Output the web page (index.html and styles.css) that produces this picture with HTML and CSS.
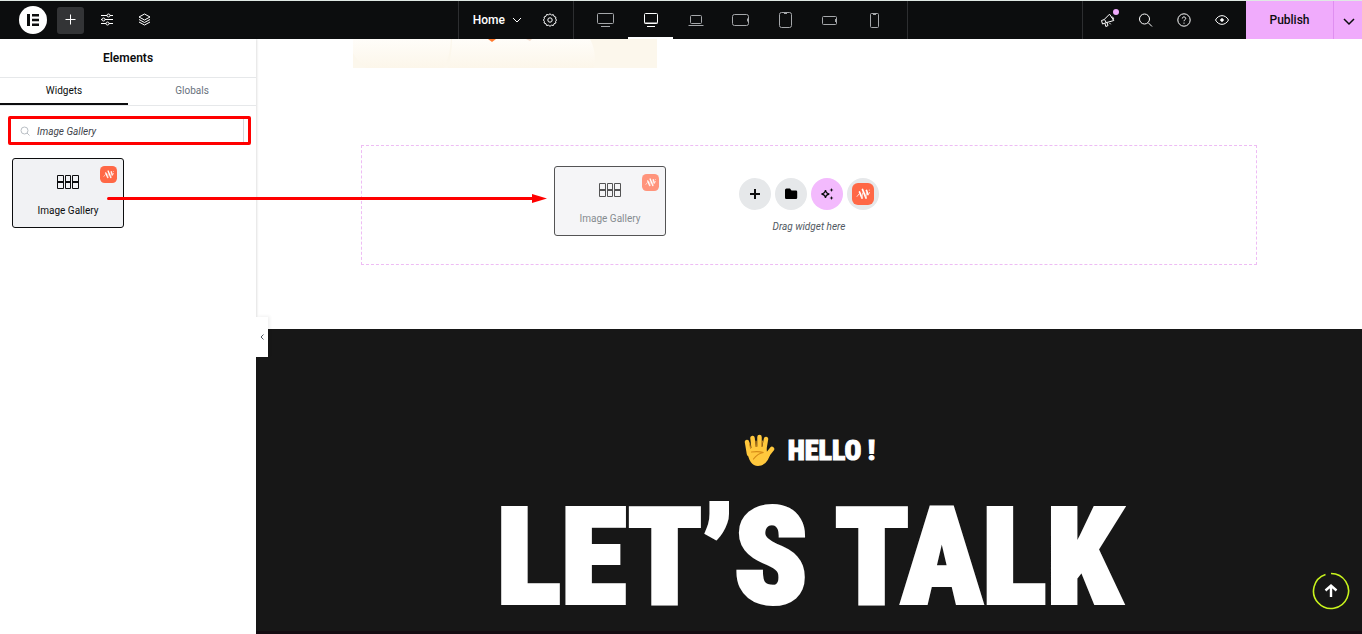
FILE: index.html
```html
<!DOCTYPE html>
<html lang="en">
<head>
  <meta charset="UTF-8">
  <meta name="viewport" content="width=device-width,initial-scale=1.0">
  <title>Home - Editor</title>
  <link rel="stylesheet" href="styles.css">
</head>
<body>

  <!-- Shared icons -->
  <svg class="symbols" aria-hidden="true">
    <symbol id="badge" viewBox="0 0 22 22">
      <rect width="22" height="22" rx="6" fill="#ff6846"/>
      <path d="M7.500 9l2.500 6M10.500 6.500l3.500 8.500M14.500 7.500l1.500 4" fill="none" stroke="#fff" stroke-width="1.800" stroke-linecap="round"/>
      <path d="M5 13.500l2-2.500M10 15l.5-5M14 14l.5-5M16.500 11.500l1-2M17.300 7v.3" fill="none" stroke="#ffd9cf" stroke-width="1" stroke-linecap="round"/>
    </symbol>
    <symbol id="gallery" viewBox="0 0 22 14">
      <path d="M.5.5h6v13h-6zM8.500.5h5v13h-5zM15.500.5h6v13h-6z" fill="none" stroke="currentColor"/>
      <path d="M0 7h7M8 7h6M15 7h7" stroke="currentColor" stroke-width="2"/>
    </symbol>
  </svg>

  <!-- Top bar -->
  <header class="topbar">
    <div class="bar-left">
      <button class="logo" aria-label="Menu">
        <svg width="28" height="28" viewBox="0 0 28 28"><circle cx="14" cy="14" r="14" fill="#fff"/><path d="M8 8h3v12H8zM13 8h7v2.500h-7zM13 12.750h7v2.500h-7zM13 17.500h7V20h-7z" fill="#0c0d0e"/></svg>
      </button>
      <button class="tool active" aria-label="Add element">
        <svg width="16" height="16" viewBox="0 0 16 16"><path d="M7.500 2.500v10M2.500 7.500h10"/></svg>
      </button>
      <button class="tool" aria-label="Site settings">
        <svg width="16" height="16" viewBox="0 0 16 16"><path d="M1 3.500h6M10 3.500h3M1 7.500h1M5 7.500h8M1 11.500h5M9 11.500h4"/><circle cx="8.500" cy="3.500" r="1.500"/><circle cx="3.500" cy="7.500" r="1.500"/><circle cx="7.500" cy="11.500" r="1.500"/></svg>
      </button>
      <button class="tool" aria-label="Structure">
        <svg width="16" height="16" viewBox="0 0 16 16"><path d="M7.500 2L2 5l5.500 3L13 5zM2 7.500l5.500 3 5.500-3M2 10l5.500 3 5.500-3"/></svg>
      </button>
    </div>

    <div class="bar-center">
      <div class="page-box">
        <button class="page-button">Home
          <svg width="10" height="10" viewBox="0 0 10 10"><path d="M1 3l4 4 4-4"/></svg>
        </button>
        <button class="icon-button" aria-label="Page settings">
          <svg width="16" height="16" viewBox="0 0 16 16"><path d="M8 1.800l1.500 1.200 1.900-.3.700 1.800 1.800.7-.3 1.800L14.600 8l-1 1.300.3 1.700-1.800.7-.7 1.800-1.900-.3L8 14.300l-1.500-1.100-1.900.3-.7-1.800-1.800-.7.300-1.700L1.400 8l1-1.300L2.100 5l1.800-.7.700-1.800 1.900.3z"/><circle cx="8" cy="8" r="2.200"/></svg>
        </button>
      </div>
      <div class="devices">
        <button class="device" aria-label="Widescreen"><svg width="18" height="18" viewBox="0 0 18 18"><rect x=".5" y="3.500" width="16" height="10" rx="1"/><path d="M4 16.500h9"/></svg></button>
        <button class="device active" aria-label="Desktop"><svg width="18" height="18" viewBox="0 0 18 18"><rect x="2.500" y="3.500" width="13" height="10" rx="1"/><path d="M2.500 13h13M5 16.500h8"/></svg></button>
        <button class="device" aria-label="Laptop"><svg width="18" height="18" viewBox="0 0 18 18"><rect x="3.500" y="5.500" width="11" height="8" rx="1"/><path d="M1.500 15.500h15"/></svg></button>
        <button class="device" aria-label="Tablet landscape"><svg width="18" height="18" viewBox="0 0 18 18"><rect x=".5" y="4.500" width="16" height="11" rx="2"/><path d="M15.500 8.500v3"/></svg></button>
        <button class="device" aria-label="Tablet portrait"><svg width="18" height="18" viewBox="0 0 18 18"><rect x="2.500" y="2.500" width="12" height="15" rx="2"/><path d="M7 3.500h3"/></svg></button>
        <button class="device" aria-label="Mobile landscape"><svg width="18" height="18" viewBox="0 0 18 18"><rect x=".5" y="6.500" width="14" height="8" rx="1"/><path d="M13.500 9v3"/></svg></button>
        <button class="device" aria-label="Mobile portrait"><svg width="18" height="18" viewBox="0 0 18 18"><rect x="3.500" y="3.500" width="8" height="14" rx="1"/><path d="M6 4.500h3"/></svg></button>
      </div>
    </div>

    <div class="bar-right">
      <div class="actions">
        <button class="icon-button" aria-label="What's new">
          <svg width="16" height="16" viewBox="0 0 16 16"><path d="M1.500 8.500l2.500-.8 5.500-5.500 4.300 6.300-7 2-4.300 1.500zM4.500 7.500l2 3.500M5 11.500l.8 3 2.200-.9-1-3M9.500 11l1.200 1.300M11.500 5.300c1.800-.6 2.700 1 1.600 2.400"/></svg>
          <span class="dot"></span>
        </button>
        <button class="icon-button" aria-label="Finder">
          <svg width="16" height="16" viewBox="0 0 16 16"><circle cx="6.500" cy="7" r="5"/><path d="M10.200 10.700L14 14.500"/></svg>
        </button>
        <button class="icon-button" aria-label="Help">
          <svg width="16" height="16" viewBox="0 0 16 16"><circle cx="8" cy="8" r="6.200"/><path d="M6.300 6.500c0-2.300 3.500-2 3.400.1C9.600 7.800 8 7.700 8 9.200M8 10.600v1.100"/></svg>
        </button>
        <button class="icon-button" aria-label="Preview">
          <svg width="16" height="16" viewBox="0 0 16 16"><path d="M1.500 8C4.500 2.200 11.500 2.200 14.500 8 11.500 13.800 4.500 13.800 1.500 8z"/><circle cx="8" cy="8" r="1.300" fill="currentColor"/></svg>
        </button>
      </div>
      <button class="publish">Publish</button>
      <button class="publish-more" aria-label="Save options">
        <svg width="14" height="14" viewBox="0 0 14 14"><path d="M3 6l5 5 5-5" stroke-width="1.500"/></svg>
      </button>
    </div>
  </header>

  <div class="editor">
    <!-- Elements panel -->
    <aside class="panel">
      <h1 class="panel-title">Elements</h1>
      <nav class="tabs">
        <button class="tab active">Widgets</button>
        <button class="tab">Globals</button>
      </nav>
      <div class="search">
        <svg width="10" height="10" viewBox="0 0 10 10"><circle cx="4.500" cy="4.500" r="3.500"/><path d="M7 7l2.500 2.500"/></svg>
        <input type="text" class="search-input" value="Image Gallery" aria-label="Search widget">
      </div>
      <button class="widget">
        <svg class="widget-icon"><use href="#gallery"/></svg>
        <span>Image Gallery</span>
        <svg class="widget-badge"><use href="#badge"/></svg>
      </button>
      <button class="panel-toggle" aria-label="Hide panel">
        <svg width="6" height="8" viewBox="0 0 6 8"><path d="M4.500 1.500L2 4l2.500 2.500"/></svg>
      </button>
    </aside>

    <!-- Page canvas -->
    <main class="canvas">
      <svg class="banner" viewBox="0 0 304 29" preserveAspectRatio="none" aria-hidden="true">
        <defs><linearGradient id="cream" x2="0" y2="1"><stop stop-color="#fffdf9"/><stop offset="1" stop-color="#fcf6ea"/></linearGradient></defs>
        <path d="M0 0h304v29H0z" fill="#fcf7ec"/>
        <path d="M0 0h98q-1 18-7 29H13Q4 22 0 14z" fill="url(#cream)"/>
        <path d="M99 0h138q7 13 4 29H95q4-14 4-29z" fill="url(#cream)"/>
        <path d="M135 0h8l-4 3z" fill="#ff792d"/>
        <path d="M173 0h6l-2 2z" fill="#f3d9ca"/>
      </svg>

      <section class="drop-area">
        <div class="drop-buttons">
          <button class="round" aria-label="Add container"><svg width="14" height="14" viewBox="0 0 14 14"><path d="M7 2v10M2 7h10" stroke="#0c0d0e" stroke-width="2"/></svg></button>
          <button class="round" aria-label="Add template"><svg width="14" height="14" viewBox="0 0 14 14"><path d="M1 3q0-1.500 1.500-1.500H6L7.500 3.500h4.500q1.200 0 1.200 1.200v6q0 1.300-1.300 1.300H2.300Q1 12 1 10.700z" fill="#000"/></svg></button>
          <button class="round ai" aria-label="Build with AI"><svg width="14" height="14" viewBox="0 0 14 14"><path d="M5.500 3Q6 6.500 9.300 7 6 7.500 5.500 11 5 7.500 1.500 7 5 6.500 5.500 3z" fill="none" stroke="#0c0d0e" stroke-width="1.300"/><path d="M11.500 1l.6 1.400 1.400.6-1.400.6-.6 1.400-.6-1.400L9.500 3l1.400-.6zM11.500 9l.6 1.400 1.400.6-1.400.6-.6 1.400-.6-1.400-1.400-.6 1.400-.6z" fill="#0c0d0e"/></svg></button>
          <button class="round" aria-label="Template library"><svg width="22" height="22"><use href="#badge"/></svg></button>
        </div>
        <p class="drop-text">Drag widget here</p>
      </section>

      <section class="contact">
        <p class="hello">
          <svg width="32" height="34" viewBox="0 0 32 34" aria-hidden="true">
            <path d="M6 20L4 8M11 17L9.500 4M16.500 17V3M21 17L23 5M21 25l8-10" fill="none" stroke="#ffc83d" stroke-width="4.500" stroke-linecap="round"/>
            <path d="M4 16q8-5 19-3l1 5 4-1q-3 15-13 15-9 0-11-16z" fill="#ffc83d"/>
            <path d="M8.500 18q7-1 12 .5-6 1-10 6.500M7.500 14L6.500 9M13.300 12.500L13 7M18.700 12.500L19.400 7" fill="none" stroke="#d68b18" stroke-width="1.200" stroke-linecap="round"/>
          </svg>
          <span>HELLO !</span>
        </p>
        <h2 class="talk">LET’S TALK</h2>
      </section>
    </main>
  </div>

  <!-- Dragged widget and its path -->
  <div class="widget ghost">
    <svg class="widget-icon"><use href="#gallery"/></svg>
    <span>Image Gallery</span>
    <svg class="widget-badge"><use href="#badge"/></svg>
  </div>
  <svg class="arrow" viewBox="0 0 440 10" aria-hidden="true"><path d="M1.500 5.500H428" stroke="red" stroke-width="3" stroke-linecap="round"/><path d="M425 1l15 4.500-15 4.500z" fill="red"/></svg>

  <a href="#" class="to-top" aria-label="Back to top">
    <svg width="38" height="38" viewBox="0 0 38 38"><path d="M19 1.500A17.500 17.500 0 1 1 13.500 2.400" fill="none" stroke="#c8f31d" stroke-width="1.600"/><path d="M19 25V14M13.500 18.500L19 13.500l5.500 5" fill="none" stroke="#fff" stroke-width="2.400"/></svg>
  </a>

</body>
</html>
```
FILE: styles.css
```css
/* Base */
* { margin:0; padding:0; box-sizing:border-box; }
body {
  height:100vh; overflow:hidden; position:relative;
  display:flex; flex-direction:column;
  font-family:Roboto,sans-serif; font-size:10px; color:#0c0d0e; background:#fff;
}
button { border:none; background:none; color:inherit; font:inherit; cursor:pointer; }
svg { display:block; }
.symbols { position:absolute; width:0; height:0; }

/* Top bar */
.topbar {
  display:grid; grid-template-columns:1fr auto 454px;
  height:39px; flex:none; border-top:1px solid #dfe8e3;
  background:#0c0d0e; color:#fff;
}
.topbar button { display:flex; align-items:center; justify-content:center; }
.topbar svg { fill:none; stroke:currentColor; }
.bar-left { display:flex; align-items:center; gap:10px; padding-left:19px; }
.topbar .logo svg { stroke:none; }
.tool { width:27px; height:27px; border-radius:3px; }
.tool.active { background:#333436; }
.bar-center { display:flex; border:1px solid #2d2e30; border-width:0 1px; }
.page-box { display:flex; align-items:center; gap:20px; padding:0 15px 0 14px; border-right:1px solid #2d2e30; }
.page-button { gap:7px; font-size:12px; font-weight:500; }
.devices { display:flex; padding:0 9px; }
.device { width:45px; color:#a5a7aa; border-bottom:2px solid transparent; }
.device.active { color:#fff; border-bottom-color:#fff; }

.bar-right { display:flex; justify-content:flex-end; }
.actions { display:flex; align-items:center; gap:22px; padding:0 16px 0 17px; border-left:1px solid #2d2e30; }
.icon-button { position:relative; }
.dot { position:absolute; top:-3px; right:-3px; width:6px; height:6px; border-radius:50%; background:#f0abfc; }
.publish, .publish-more { background:#f0abfc; color:#0c0d0e; }
.publish { width:87px; font-size:12px; font-weight:500; }
.publish-more { width:29px; border-left:1px solid #df8ff0; }

/* Panel */
.editor { display:flex; flex:1; min-height:0; }
.panel { position:relative; flex:none; width:256px; box-shadow:1px 0 2px rgba(0,0,0,.12); }
.panel-title { height:38px; line-height:38px; text-align:center; font-size:12px; font-weight:600; }
.tabs { display:flex; height:29px; border:1px solid #e6e8ea; border-width:1px 0; }
.tab { flex:1; color:#69727d; border-bottom:2px solid transparent; }
.tab.active { color:#0c0d0e; border-bottom-color:#0c0d0e; }
.search {
  display:flex; align-items:center; height:29px; margin:10px 5px 0 8px;
  padding:0 4px 0 9px; border:3px solid red; border-radius:2px;
}
.search svg { fill:none; stroke:#babfc5; }
.search-input {
  flex:1; min-width:0; height:23px; padding:2px 0 0 7px; outline:none;
  border:0 solid #d5d8dc; border-right-width:1px; background:none;
  font:italic 10px Roboto,sans-serif; color:#3f444b;
}
.widget {
  position:relative; display:flex; flex-direction:column; align-items:center;
  width:112px; height:70px; margin:13px 0 0 12px; padding-top:16px; gap:16px;
  border:1px solid #0c0d0e; border-radius:3px; background:#f1f2f4; line-height:12px;
}
.widget-icon { width:22px; height:14px; }
.widget-badge { position:absolute; top:7px; right:6px; width:17px; height:17px; }
.panel-toggle {
  position:absolute; top:278px; right:-12px; z-index:1;
  display:flex; align-items:center; justify-content:center;
  width:12px; height:40px; background:#fff;
  box-shadow:2px -1px 3px rgba(0,0,0,.06);
}
.panel-toggle svg { fill:none; stroke:#515962; }

/* Canvas */
.canvas { flex:1; min-width:0; display:flex; flex-direction:column; align-items:center; }
.banner { flex:none; align-self:flex-start; width:304px; height:29px; margin-left:97px; }
.drop-area {
  flex:none; width:81%; height:120px; margin:77px 0 64px; padding-top:32px;
  border:1px dashed #eebcf4; text-align:center;
}
.drop-buttons { display:flex; justify-content:center; gap:4px; }
.round {
  display:flex; align-items:center; justify-content:center;
  width:32px; height:32px; border-radius:50%; background:#e6e8ea;
}
.round.ai { background:#f3bafd; }
.drop-text { margin-top:10px; line-height:14px; font-style:italic; color:#515962; }

.contact {
  flex:1; width:100%; padding-top:105px; overflow:hidden;
  background:#171717; border-bottom:3px solid #140c12; color:#fff;
  font-family:"Roboto Condensed","Open Sans Condensed","Noto Sans Condensed",Roboto,sans-serif; font-weight:900; text-align:center;
}
.hello {
  display:flex; align-items:center; justify-content:center; gap:13px;
  line-height:34px; font-size:28px; -webkit-text-stroke:1px #fff;
}
.talk { margin-top:15px; font-size:134px; line-height:150px; font-weight:900; white-space:nowrap; -webkit-text-stroke:4px #fff; }

/* Overlays */
.ghost { position:absolute; top:166px; left:554px; margin:0; opacity:.7; }
.ghost span { color:#515962; }
.arrow { position:absolute; top:193px; left:107px; width:440px; height:10px; }
.to-top { position:absolute; right:12px; bottom:24px; }
```
